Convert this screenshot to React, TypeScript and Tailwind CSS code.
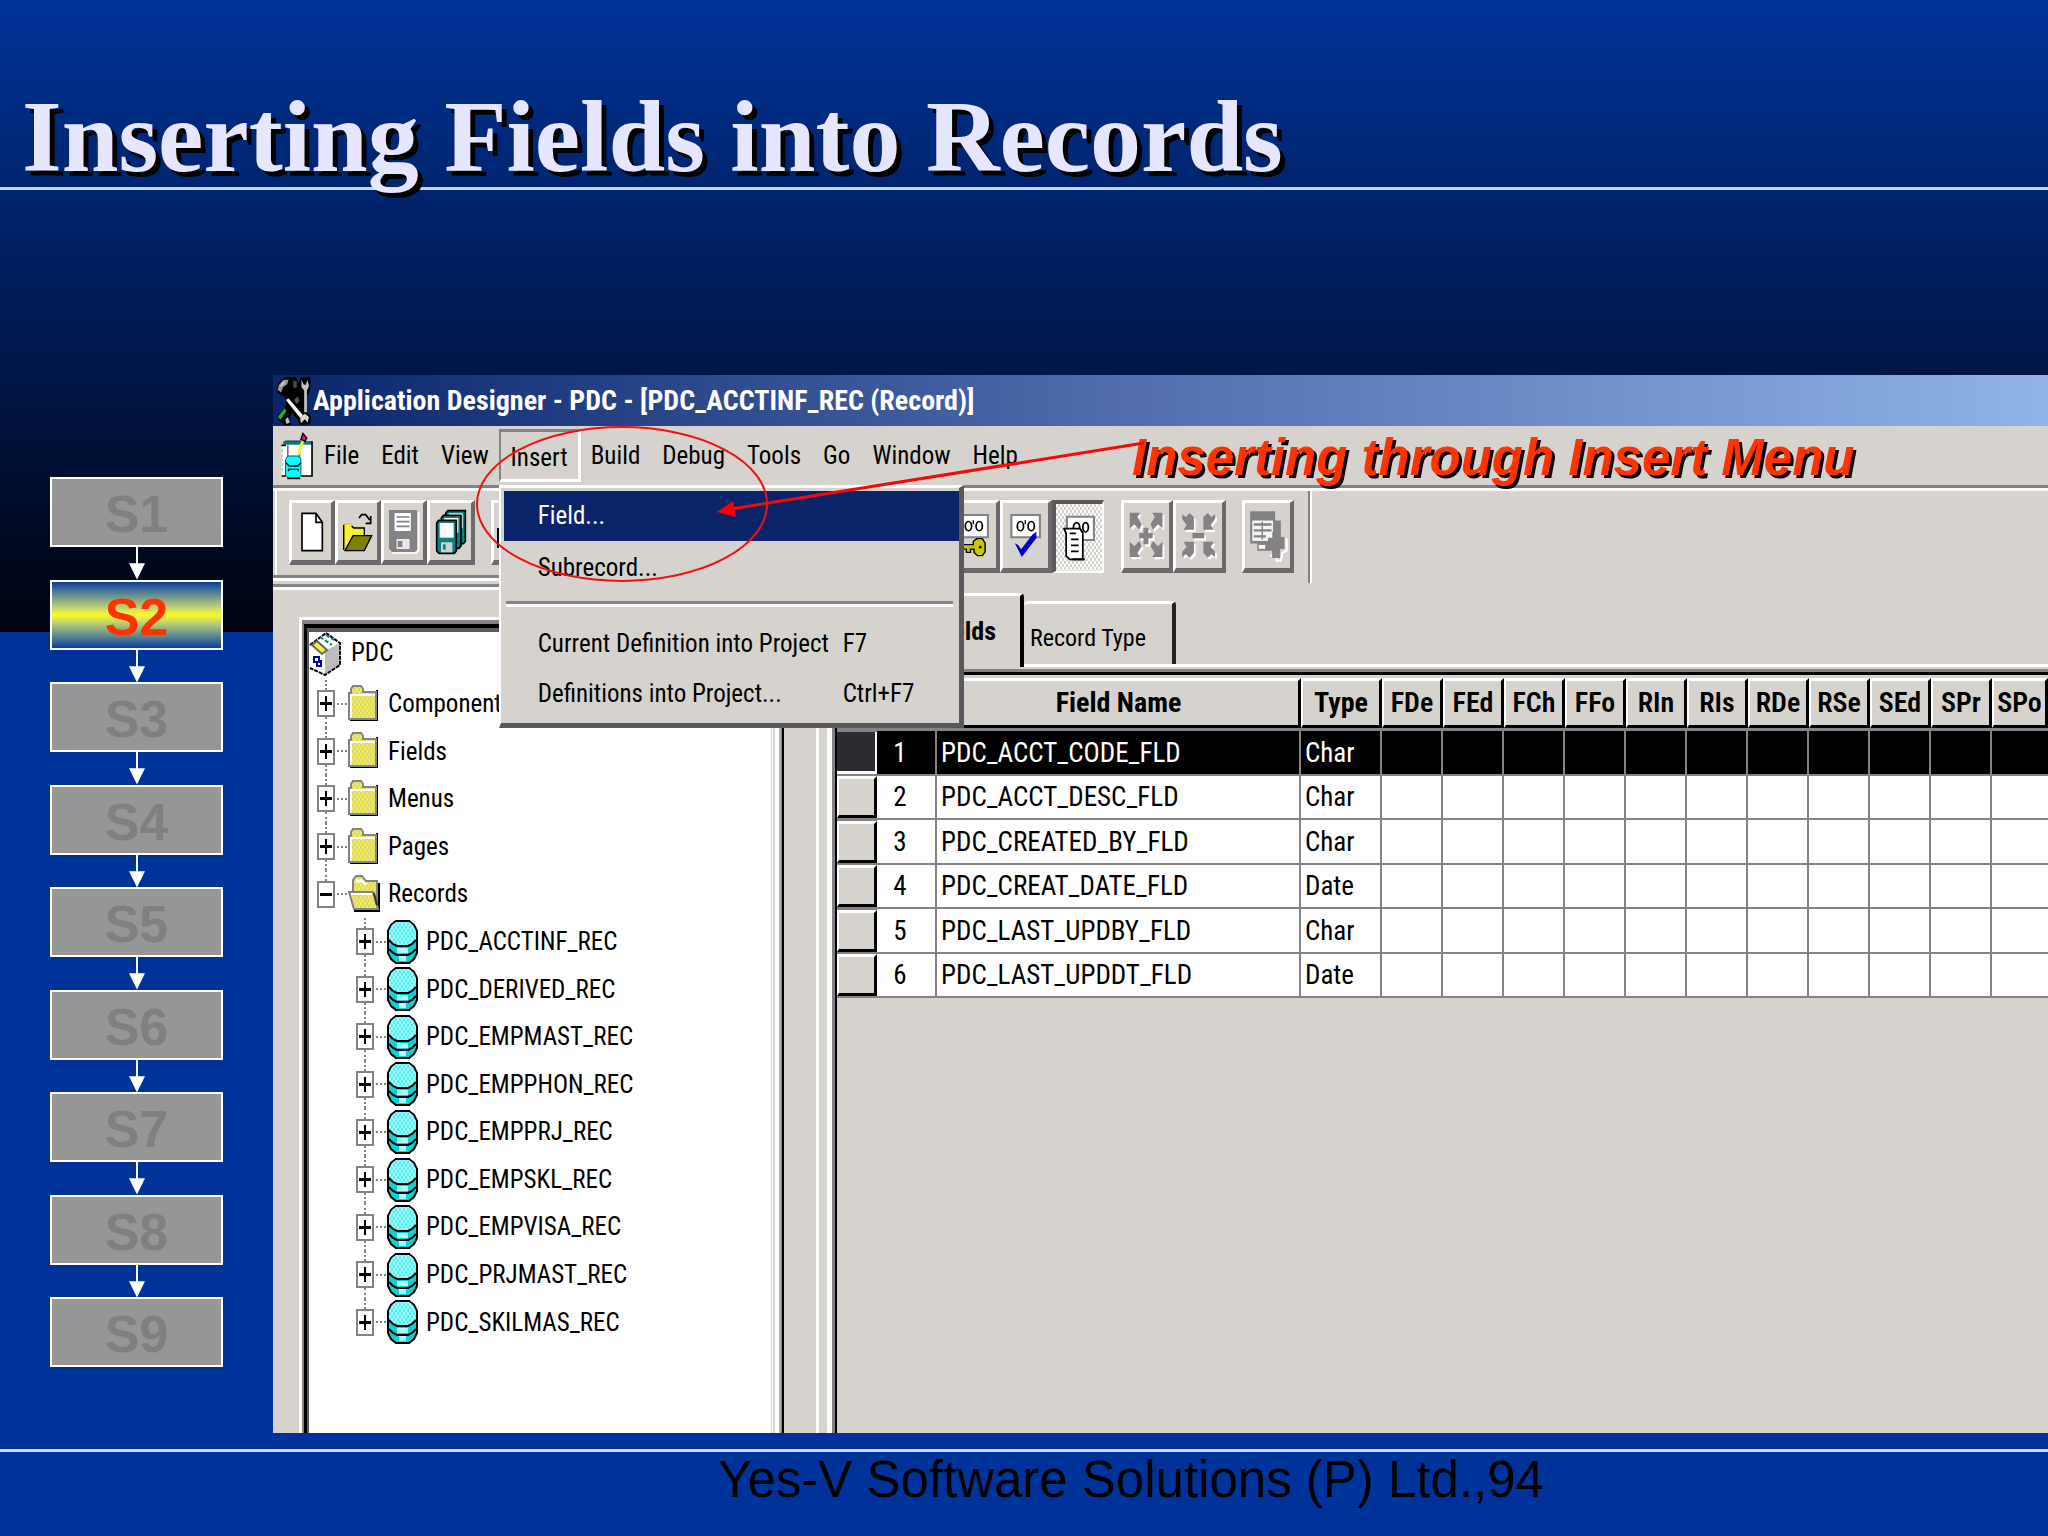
import React from "react";

const steps = ["S1", "S2", "S3", "S4", "S5", "S6", "S7", "S8", "S9"];
const folders = ["Components", "Fields", "Menus", "Pages"];
const records = [
  "PDC_ACCTINF_REC",
  "PDC_DERIVED_REC",
  "PDC_EMPMAST_REC",
  "PDC_EMPPHON_REC",
  "PDC_EMPPRJ_REC",
  "PDC_EMPSKL_REC",
  "PDC_EMPVISA_REC",
  "PDC_PRJMAST_REC",
  "PDC_SKILMAS_REC",
];
const flags = ["FDe", "FEd", "FCh", "FFo", "RIn", "RIs", "RDe", "RSe", "SEd", "SPr", "SPo"];
const fields = [
  ["PDC_ACCT_CODE_FLD", "Char"],
  ["PDC_ACCT_DESC_FLD", "Char"],
  ["PDC_CREATED_BY_FLD", "Char"],
  ["PDC_CREAT_DATE_FLD", "Date"],
  ["PDC_LAST_UPDBY_FLD", "Char"],
  ["PDC_LAST_UPDDT_FLD", "Date"],
];

function Svg({ box, w, h, children }: { box: string; w: number; h: number; children: React.ReactNode }) {
  return (
    <svg viewBox={box} width={w} height={h} preserveAspectRatio="none" className="block shrink-0" aria-hidden="true">
      {children}
    </svg>
  );
}

function Patterns() {
  return (
    <svg width="0" height="0" className="absolute" aria-hidden="true">
      <defs>
        <pattern id="yellow" width="4" height="6" patternUnits="userSpaceOnUse">
          <rect width="4" height="6" fill="#f4f03c" />
          <rect width="2" height="3" fill="#d8d48c" />
          <rect x="2" y="3" width="2" height="3" fill="#d8d48c" />
        </pattern>
        <pattern id="cyan" width="4" height="6" patternUnits="userSpaceOnUse">
          <rect width="4" height="6" fill="#4ff4f8" />
          <rect width="2" height="3" fill="#a8fcfc" />
          <rect x="2" y="3" width="2" height="3" fill="#a8fcfc" />
        </pattern>
      </defs>
    </svg>
  );
}

function ToolsIcon() {
  return (
    <Svg box="10 12 100 146" w={34} h={50}>
      <path d="M12 40 22 24 40 16 66 16 74 34 78 16 108 16 108 52 98 72 98 116 110 130 108 152 76 154 70 138 54 120 46 136 52 154 34 156 12 140 12 128 38 96 32 72 12 62Z" fill="#000" />
      <path d="M12 52 16 38 28 24 44 22 40 36 28 44 22 60Z" fill="#9a9a9a" />
      <path d="M16 44 26 30 34 28 28 40Z" fill="#c8c8c8" />
      <path d="M58 26H68V46H58Z" fill="#4a4a4a" />
      <path d="M36 82 44 78 86 126 78 134Z" fill="#fff" />
      <path d="M82 22 88 36 94 38 100 24 104 42 98 54 98 118H90V54L82 44Z" fill="#c4c4c4" />
      <path d="M78 132 92 122 104 132 100 148 92 138 80 150Z" fill="#d6d6d6" />
      <path d="M12 132 32 106 38 114 20 140Z" fill="#16b428" />
      <path d="M34 140 42 132 48 148 38 152Z" fill="#bdbdbd" />
      <path d="M60 82 70 72 76 84 68 94Z" fill="#555" />
    </Svg>
  );
}

function DocIcon() {
  return (
    <Svg box="20 184 104 144" w={34} h={48}>
      <path d="M25 222H118V316H25Z" fill="#fff" />
      <path d="M30 211H118V222H30Z" fill="#157a7a" />
      <path d="M118 212V316H84M25 316H38M24 224H38" fill="none" stroke="#000" strokeWidth="5" />
      <path d="M36 211H90" stroke="#063c3c" strokeWidth="3" />
      <path d="M27 236V308" stroke="#c0c0c0" strokeWidth="4" strokeDasharray="8 6" />
      <path d="M44 224V258M80 240V262" stroke="#555" strokeWidth="4" />
      <path d="M44 256H78L84 266V314L76 322H46L37 314V266Z" fill="#0ff" stroke="#0a5c66" strokeWidth="3" />
      <path d="M38 276 48 286H74L84 276M46 302V296H76V302" fill="none" stroke="#000" strokeWidth="4" />
      <path d="M42 323H82" stroke="#000" strokeWidth="5" />
      <path d="M76 252 92 204" stroke="#f4f03c" strokeWidth="9" />
      <path d="M84 206 90 188 102 202 96 212Z" fill="#c020a0" stroke="#000" strokeWidth="4" />
    </Svg>
  );
}

function NewIcon() {
  return (
    <Svg box="90 424 72 120" w={24} h={40}>
      <path d="M96 428H138L157 455V540H96Z" fill="#fff" stroke="#000" strokeWidth="5" />
      <path d="M138 428V455H157" fill="none" stroke="#000" strokeWidth="5" />
    </Svg>
  );
}

function OpenIcon() {
  return (
    <Svg box="220 422 90 120" w={30} h={40}>
      <path d="M224 458H244L252 468H284V492H250L226 536H224Z" fill="#f4f03c" stroke="#d8d020" strokeWidth="4" />
      <path d="M246 464 252 470H284V492M222 536V460" fill="none" stroke="#000" strokeWidth="4" />
      <path d="M250 493H306L284 538H226Z" fill="#808000" stroke="#000" strokeWidth="4" />
      <path d="M268 440 276 430H288L300 446M303 434V456H288" fill="none" stroke="#000" strokeWidth="5" />
    </Svg>
  );
}

function SaveIcon() {
  return (
    <Svg box="358 414 98 138" w={32} h={46}>
      <path d="M370 546H444L452 538V424" fill="none" stroke="#fff" strokeWidth="5" />
      <path d="M361 417H447V536L440 543H370L361 532Z" fill="#848284" />
      <path d="M378 426H428V480H378Z" fill="#fff" />
      <path d="M384 438H424M384 452H424M384 466H424" stroke="#848284" strokeWidth="5" />
      <path d="M384 504H424V534H384Z" fill="#e8e8e8" />
      <path d="M388 510H402V528H388Z" fill="#848284" />
    </Svg>
  );
}

function Disk({ x, y }: { x: number; y: number }) {
  return (
    <g transform={`translate(${x} ${y})`}>
      <path d="M497 456 503 448H556V540L550 547H504L497 540Z" fill="#0f8080" stroke="#000" strokeWidth="5" />
      <path d="M506 456H548V500H506Z" fill="#fff" />
      <path d="M510 514H544V544H510Z" fill="#d0d0d0" />
      <path d="M516 520H524V536H516Z" fill="#0f8080" />
    </g>
  );
}

function SaveAllIcon() {
  return (
    <Svg box="492 414 96 138" w={32} h={46}>
      <Disk x={27} y={-29} />
      <Disk x={14} y={-15} />
      <Disk x={0} y={0} />
    </Svg>
  );
}

function Glasses() {
  return (
    <>
      <path d="M644 430H726V498H644Z" fill="#fff" stroke="#848284" strokeWidth="6" />
      <ellipse cx="670" cy="464" rx="9" ry="14" fill="none" stroke="#000" strokeWidth="5" />
      <ellipse cx="701" cy="464" rx="9" ry="14" fill="none" stroke="#000" strokeWidth="5" />
      <path d="M684 446V458" stroke="#000" strokeWidth="4" />
    </>
  );
}

function KeyIcon() {
  return (
    <Svg box="640 424 92 140" w={32} h={46}>
      <Glasses />
      <path d="M648 520H684V510L694 502H710L718 516V542L710 554H696L686 544V534H676V544H664V534H648Z" fill="#c8c800" stroke="#000" strokeWidth="4" />
      <circle cx="704" cy="528" r="4" fill="#000" />
    </Svg>
  );
}

function CheckIcon() {
  return (
    <Svg box="640 424 92 140" w={32} h={46}>
      <Glasses />
      <path d="M654 516 664 522 672 534 706 488 716 482V500L674 558Z" fill="#0000c8" />
    </Svg>
  );
}

function ScrollIcon() {
  return (
    <Svg box="786 430 98 144" w={34} h={48}>
      <path d="M800 438H878V508H800Z" fill="#fff" stroke="#848284" strokeWidth="6" />
      <ellipse cx="828" cy="470" rx="9" ry="14" fill="none" stroke="#000" strokeWidth="5" />
      <ellipse cx="854" cy="470" rx="8" ry="14" fill="none" stroke="#000" strokeWidth="5" />
      <path d="M792 474H838L846 486V566H808L798 556V488Z" fill="#fff" stroke="#000" strokeWidth="5" />
      <path d="M808 488H826M812 506H834M812 524H834M812 542H834" stroke="#000" strokeWidth="5" />
      <path d="M816 566H852" stroke="#000" strokeWidth="6" />
    </Svg>
  );
}

function ExpandShape() {
  return (
    <>
      <path d="M977 427H1006L999 440 1011 462 1004 478 990 462 977 474ZM1070 427H1041L1048 440 1036 462 1043 478 1057 462 1070 474ZM977 560V514L990 528 1004 512 1011 528 999 548 1006 560ZM1070 560V514L1057 528 1043 512 1036 528 1048 548 1041 560Z" />
      <path d="M1016 472H1030V488H1042V504H1030V522H1016V504H1004V488H1016Z" />
    </>
  );
}

function ExpandIcon() {
  return (
    <Svg box="972 422 108 150" w={38} h={50}>
      <g transform="translate(5 7)" fill="#fff"><ExpandShape /></g>
      <g fill="#848284"><ExpandShape /></g>
    </Svg>
  );
}

function CollapseShape() {
  return (
    <>
      <path d="M1158 478H1130L1138 464 1126 446V432L1136 440 1146 428 1158 440ZM1184 478H1212L1204 464 1216 446V432L1206 440 1196 428 1184 440ZM1158 514H1130L1138 530 1126 544V560L1136 552 1146 562 1158 548ZM1184 514H1212L1204 530 1216 544V560L1206 552 1196 562 1184 548Z" />
      <path d="M1154 488H1186V504H1154Z" />
    </>
  );
}

function CollapseIcon() {
  return (
    <Svg box="1120 422 104 150" w={38} h={50}>
      <g transform="translate(5 7)" fill="#fff"><CollapseShape /></g>
      <g fill="#848284"><CollapseShape /></g>
    </Svg>
  );
}

function AddSheetIcon() {
  return (
    <Svg box="1312 422 112 158" w={40} h={52}>
      <path d="M1374 560H1392V576H1404L1408 552 1420 546V508" fill="none" stroke="#fff" strokeWidth="6" />
      <path d="M1318 426H1388V454H1404V504H1414V540H1402V568H1380V546H1338V524H1318Z" fill="#848284" />
      <path d="M1324 454H1382V516H1324Z" fill="#f4f4f4" />
      <path d="M1328 466H1378M1328 484H1378M1328 502H1362" stroke="#848284" strokeWidth="7" />
      <path d="M1352 458V512" stroke="#848284" strokeWidth="4" />
      <path d="M1368 506H1380V488H1396V506H1412V540H1396V566H1380V540H1368Z" fill="#848284" />
      <path d="M1342 528H1360V540H1342Z" fill="#fff" />
    </Svg>
  );
}

function FolderIcon() {
  return (
    <Svg box="0 0 30 38" w={30} h={38}>
      <path d="M2 36H30V5H28V34H2Z" fill="#000" />
      <path d="M1 8H3V4L5 1H13L15 4V7H28V34H1Z" fill="url(#yellow)" stroke="#848284" strokeWidth="2" />
      <path d="M3 33V10H27" fill="none" stroke="#fff" strokeWidth="2" />
    </Svg>
  );
}

function OpenFolderIcon() {
  return (
    <Svg box="0 0 32 38" w={32} h={38}>
      <path d="M6 37H32V8H29V34H6Z" fill="#000" />
      <path d="M5 30V5L8 1H14L18 6H29V33H6Z" fill="url(#yellow)" stroke="#848284" strokeWidth="2" />
      <path d="M8 6H14L18 10" fill="none" stroke="#fff" strokeWidth="3" />
      <path d="M1 17H25L30 34H6Z" fill="url(#yellow)" stroke="#848284" strokeWidth="2" />
      <path d="M3 19H24" stroke="#fff" strokeWidth="2" />
      <path d="M26 18 29 30" stroke="#333" strokeWidth="2" />
    </Svg>
  );
}

function RecordIcon() {
  return (
    <Svg box="0 0 31 44" w={31} h={44}>
      <path d="M1 11 4 5 9 1H22L27 5 30 11V33L27 39 22 43H9L4 39 1 33Z" fill="#10d0d4" stroke="#000" strokeWidth="2" />
      <path d="M2 11 5 5 9 2H22L26 5 29 11V19L25 24 20 26H11L6 24 2 19Z" fill="url(#cyan)" />
      <path d="M10 28H21V33H10ZM12 36H19V41H12Z" fill="#a8fcfc" />
      <path d="M2 20 6 24 10 26H21L25 24 29 20" fill="none" stroke="#000" strokeWidth="2" />
      <path d="M2 29 6 33 10 35H21L25 33 29 29" fill="none" stroke="#000" strokeWidth="2" />
      <path d="M8 1H23M8 43H23" stroke="#000" strokeWidth="2" />
    </Svg>
  );
}

function CubeIcon() {
  return (
    <Svg box="0 0 32 44" w={32} h={44}>
      <path d="M1 13 17 1 31 11V33L16 43 1 36Z" fill="#fff" />
      <path d="M16 19 31 11V33L16 43Z" fill="#bdbdbd" />
      <path d="M1 13 17 1 31 11V33L16 43 1 36" fill="none" stroke="#000" strokeWidth="2" strokeDasharray="4 1" />
      <path d="M11 5 23 13M17 3 25 8" stroke="#157a7a" strokeWidth="2" strokeDasharray="4 2" />
      <path d="M3 13 8 9 18 18 13 22Z" fill="#f4f03c" stroke="#666" strokeWidth="2" />
      <path d="M5 25H10V30H5ZM8 30V34H12V28" fill="none" stroke="#0000a8" strokeWidth="2" />
    </Svg>
  );
}

function Tool({ label, children, className = "" }: { label: string; children: React.ReactNode; className?: string }) {
  return (
    <button
      type="button"
      aria-label={label}
      className={`flex items-center justify-center border-t-3 border-r-4 border-b-5 border-l-3 border-t-white border-r-[#6b696b] border-b-[#6b696b] border-l-white bg-[#d6d3ce] ${className}`}
    >
      {children}
    </button>
  );
}

function Toggle({ name, open = false }: { name: string; open?: boolean }) {
  return (
    <button
      type="button"
      aria-label={`${open ? "Collapse" : "Expand"} ${name}`}
      className="flex h-[27px] w-[18px] shrink-0 items-center justify-center border-2 border-[#848284] bg-white"
    >
      <Svg box="0 0 12 15" w={12} h={15}>
        <path d="M0 7.5H12" stroke="#000" strokeWidth="3" />
        {!open && <path d="M6 0V15" stroke="#000" strokeWidth="2" />}
      </Svg>
    </button>
  );
}

/* One tree row: a dotted guide above and below the toggle, then icon and label. */
function TreeRow({ name, nested = false, open = false }: { name: string; nested?: boolean; open?: boolean }) {
  return (
    <li className={`flex min-h-0 flex-1 items-center ${nested ? "pl-[47px]" : "pl-2"}`}>
      <span className="flex h-full flex-col items-center">
        <span className="w-0 flex-1 border-l-2 border-dotted border-[#848284]" />
        <Toggle name={name} open={open} />
        <span className={`w-0 flex-1 border-l-2 border-dotted ${open || name === "PDC_SKILMAS_REC" ? "border-transparent" : "border-[#848284]"}`} />
      </span>
      <span className="mr-px ml-0.5 w-2.5 border-t-2 border-dotted border-[#848284]" />
      {nested ? <RecordIcon /> : open ? <OpenFolderIcon /> : <FolderIcon />}
      <span className={nested ? "ml-2" : open ? "ml-2" : "ml-2.5"}>{name}</span>
    </li>
  );
}

function InsertMenu() {
  return (
    <div
      role="menu"
      className="absolute top-[53px] -left-0.5 z-10 w-[465px] border-t-3 border-r-5 border-b-5 border-l-2 border-t-white border-r-[#5a585a] border-b-[#5a585a] border-l-white bg-[#d6d3ce] pt-[3px] pb-1 pl-[3px]"
    >
      <button role="menuitem" type="button" className="flex h-[50px] w-full items-center bg-[#0a246a] pl-[34px] text-white">
        Field...
      </button>
      <button role="menuitem" type="button" className="flex h-[54px] w-full items-center pl-[34px]">
        Subrecord...
      </button>
      <hr className="mt-1.5 mr-1.5 mb-3 ml-0.5 h-1.5 border-t-3 border-b-3 border-t-[#848284] border-b-white" />
      <button role="menuitem" type="button" className="flex h-[50px] w-full items-center pl-[34px]">
        <span className="w-[305px] text-left">Current Definition into Project</span>
        <span>F7</span>
      </button>
      <button role="menuitem" type="button" className="flex h-[50px] w-full items-center pl-[34px]">
        <span className="w-[305px] text-left">Definitions into Project...</span>
        <span>Ctrl+F7</span>
      </button>
    </div>
  );
}

function MenuBar() {
  return (
    <nav className="flex h-[59px] items-center pl-[7px]">
      <DocIcon />
      <button type="button" className="ml-2.5">File</button>
      <button type="button" className="ml-[22px]">Edit</button>
      <button type="button" className="ml-[22px]">View</button>
      <div className="relative ml-2.5 h-[53px] w-[82px] border-t-3 border-r-3 border-b-3 border-l-2 border-t-[#848284] border-r-white border-b-white border-l-[#848284]">
        <button type="button" aria-haspopup="menu" aria-expanded="true" className="h-full w-full pt-1">
          Insert
        </button>
        <InsertMenu />
      </div>
      <button type="button" className="ml-2.5">Build</button>
      <button type="button" className="ml-[22px]">Debug</button>
      <button type="button" className="ml-[22px]">Tools</button>
      <button type="button" className="ml-[22px]">Go</button>
      <button type="button" className="ml-[22px]">Window</button>
      <button type="button" className="ml-[22px]">Help</button>
    </nav>
  );
}

function Toolbar() {
  return (
    <div className="flex h-[105px] border-t-3 border-t-[#848284]">
      <div className="flex w-[675px] flex-col border-t-3 border-t-white">
        <div className="ml-0.5 flex flex-1 items-start border-l-2 border-l-white pt-[9px] pl-3">
          <Tool label="New" className="h-[65px] w-[46px]"><NewIcon /></Tool>
          <Tool label="Open" className="h-[65px] w-[46px]"><OpenIcon /></Tool>
          <Tool label="Save" className="h-[65px] w-[46px]"><SaveIcon /></Tool>
          <Tool label="Save All" className="h-[65px] w-[48px]"><SaveAllIcon /></Tool>
          <Tool label="Print" className="ml-4 h-[65px] w-[46px]">
            <Svg box="0 0 38 46" w={38} h={46}>
              <path d="M3 20H35V38H3Z" fill="#d6d3ce" stroke="#000" strokeWidth="2" />
              <path d="M9 20V4H29V20" fill="#fff" stroke="#000" strokeWidth="2" />
            </Svg>
          </Tool>
        </div>
        <div className="h-1.5 border-t-3 border-b-3 border-t-[#848284] border-b-white" />
        <div className="mt-[3px] h-1.5 border-t-3 border-b-3 border-t-[#848284] border-b-white" />
      </div>
      <div className="flex flex-1 items-start border-t-3 border-t-white pt-[9px]">
        <Tool label="Key display" className="h-[73px] w-[52px]"><KeyIcon /></Tool>
        <Tool label="Edit display" className="h-[73px] w-[52px]"><CheckIcon /></Tool>
        <button
          type="button"
          aria-label="Use display"
          aria-pressed="true"
          className="flex h-[73px] w-[52px] items-center justify-center border-t-4 border-r-2 border-b-2 border-l-4 border-t-[#5a585a] border-r-white border-b-white border-l-[#5a585a] bg-[repeating-conic-gradient(#d6d3ce_0_25%,#ffffff_0_50%)] bg-[length:4px_6px]"
        >
          <ScrollIcon />
        </button>
        <Tool label="Expand" className="ml-[17px] h-[73px] w-[52px]"><ExpandIcon /></Tool>
        <Tool label="Collapse" className="h-[73px] w-[53px]"><CollapseIcon /></Tool>
        <Tool label="Insert into project" className="ml-4 h-[73px] w-[52px]"><AddSheetIcon /></Tool>
        <span className="-mt-[9px] ml-3.5 h-[92px] w-1 border-r-2 border-l-2 border-r-white border-l-[#848284]" />
      </div>
    </div>
  );
}

function ProjectTree() {
  return (
    <div className="flex w-[559px] shrink-0 pt-[27px] pl-[26px]">
      <div className="flex flex-1 border-t-3 border-l-3 border-white">
        <div className="flex flex-1 border-t-4 border-l-2 border-[#848284]">
          <div className="flex flex-1 border-t-4 border-l-3 border-black">
            <div className="flex-1 border-t-4 border-l-2 border-[#5a585a] bg-white text-[25px]">
              <div className="flex h-12 items-start">
                <CubeIcon />
                <span className="ml-2.5 pt-0.5">PDC</span>
              </div>
              <ul className="flex h-[666px] flex-col">
                {folders.map((name) => (
                  <TreeRow key={name} name={name} />
                ))}
                <TreeRow name="Records" open />
                {records.map((name) => (
                  <TreeRow key={name} name={name} nested />
                ))}
              </ul>
            </div>
          </div>
        </div>
      </div>
      <div className="w-1 border-r-2 border-l border-r-[#d6d3ce] border-l-[#d6d3ce] bg-white" />
      <div className="w-1.5 border-r-2 border-r-[#b5b2ad] bg-white" />
      <div className="w-[3px] border-r-2 border-r-black bg-[#848284]" />
      <div className="w-8" />
      <div className="w-[3px] bg-white" />
      <div className="w-2" />
      <div className="w-[5px] bg-white" />
    </div>
  );
}

function FieldGrid() {
  return (
    <table className="w-full table-fixed border-separate border-spacing-0 text-[27px]">
      <colgroup>
        <col className="w-10" />
        <col className="w-[60px]" />
        <col className="w-[364px]" />
        <col className="w-[81px]" />
        {flags.map((f) => (
          <col key={f} className={f === "SPo" ? "" : "w-[61px]"} />
        ))}
      </colgroup>
      <thead>
        <tr className="h-[53px] text-[28px] leading-8">
          {["", "", "Field Name", "Type", ...flags].map((h, i) => (
            <th
              key={i}
              className={`overflow-hidden border-b-3 border-b-[#848284] p-0 whitespace-nowrap ${i > 3 ? "font-semibold" : "font-bold"}`}
            >
              <div className="flex h-[50px] items-center justify-center border-t-3 border-r-3 border-b-3 border-l-2 border-t-white border-r-black border-b-black border-l-white">
                {h}
              </div>
            </th>
          ))}
        </tr>
      </thead>
      <tbody>
        {fields.map(([name, type], i) => (
          <tr key={name} className={`leading-8 odd:h-[45px] even:h-11 ${i === 0 ? "bg-black text-white" : "bg-white text-black"}`}>
            <td className="border-b-2 border-[#848284] bg-[#848284] p-0">
              <div
                className={
                  i === 0
                    ? "h-[42px] border-r-2 border-b-3 border-white bg-[#2a2c31]"
                    : "h-[42px] border-t-3 border-r-3 border-b-3 border-l-2 border-t-white border-r-black border-b-black border-l-white bg-[#d6d3ce]"
                }
              />
            </td>
            <td className="border-r-2 border-b-2 border-[#848284] p-0 pr-3 text-center">{i + 1}</td>
            <td className="border-r-2 border-b-2 border-[#848284] p-0 pl-1">{name}</td>
            <td className="border-r-2 border-b-2 border-[#848284] p-0 pl-1">{type}</td>
            {flags.map((f) => (
              <td key={f} className="border-r-2 border-b-2 border-[#848284] p-0 last:border-r-0" />
            ))}
          </tr>
        ))}
      </tbody>
    </table>
  );
}

function RecordPane() {
  return (
    <div className="flex min-w-0 flex-1 flex-col pt-[3px]">
      <div role="tablist" className="flex h-[74px] items-end pl-2">
        <button
          role="tab"
          aria-selected="true"
          type="button"
          className="h-[74px] w-[184px] rounded-t border-t-3 border-r-4 border-t-white border-r-black pr-6 text-right text-[26px] font-bold"
        >
          Fields
        </button>
        <div className="flex h-[66px] flex-1 border-b-3 border-b-white">
          <button
            role="tab"
            aria-selected="false"
            type="button"
            className="w-[152px] rounded-t border-t-3 border-r-4 border-t-white border-r-[#222] pt-2 pl-1.5 text-left text-[24px]"
          >
            Record Type
          </button>
        </div>
      </div>
      <div className="mt-0.5 flex-1 overflow-hidden border-t-3 border-l-3 border-t-[#848284] border-l-[#848284]">
        <div className="h-full border-t-3 border-l-2 border-black pt-[3px]">
          <FieldGrid />
        </div>
      </div>
    </div>
  );
}

function DesignerWindow() {
  return (
    <section className="relative flex min-w-0 flex-1 flex-col bg-[#d6d3ce] font-['Roboto_Condensed','Liberation_Sans',sans-serif] text-[25px] text-black">
      <div className="flex h-[51px] items-center bg-linear-to-r from-[#0a246a] via-[#5470b0] via-50% to-[#90b4e6] pl-1 text-[28px] font-bold text-white">
        <ToolsIcon />
        <span className="ml-0.5 whitespace-nowrap">Application Designer - PDC - [PDC_ACCTINF_REC (Record)]</span>
      </div>
      <MenuBar />
      <Toolbar />
      <div className="flex flex-1">
        <ProjectTree />
        <RecordPane />
      </div>
      <svg className="pointer-events-none absolute top-0 left-0 z-20" width="900" height="220" aria-hidden="true">
        <ellipse cx="349" cy="129" rx="145" ry="77" fill="none" stroke="#f01010" strokeWidth="2" />
        <path d="M871 68 458 134" stroke="#f80808" strokeWidth="3" />
        <path d="M444 137 460 126 463 142Z" fill="#f00" />
      </svg>
      <p className="absolute top-[53px] left-[859px] z-10 font-['Liberation_Sans',Arial,sans-serif] text-[51px] leading-[60px] font-bold whitespace-nowrap text-[#ff3300] italic [text-shadow:3px_3px_0_#000]">
        Inserting through Insert Menu
      </p>
    </section>
  );
}

function StepChain() {
  return (
    <aside className="w-[273px] shrink-0 pt-[102px] pl-[50px] font-['Liberation_Sans',Arial,sans-serif]">
      <ol className="flex h-[890px] w-[173px] flex-col">
        {steps.map((s, i) => (
          <React.Fragment key={s}>
            {i > 0 && (
              <li aria-hidden="true" className="flex flex-1 justify-center">
                <svg viewBox="0 0 18 32" preserveAspectRatio="none" className="h-full w-[18px]">
                  <path d="M9 0V20" stroke="#fff" strokeWidth="2" />
                  <path d="M1 16H17L9 32Z" fill="#fff" />
                </svg>
              </li>
            )}
            <li
              className={`flex h-[70px] shrink-0 items-center justify-center border-2 border-white pt-1 text-[52px] leading-[60px] font-bold ${
                s === "S2"
                  ? "bg-linear-to-b from-[#0c3c98] via-[#fcfc08] to-[#0c3c98] text-[#ff3300]"
                  : "bg-[#969696] text-[#808080]"
              }`}
            >
              {s}
            </li>
          </React.Fragment>
        ))}
      </ol>
    </aside>
  );
}

export default function App() {
  return (
    <div className="flex min-h-screen flex-col overflow-hidden bg-[#003399] bg-[linear-gradient(to_bottom,#003399_0,#00081e_560px,#000412_632px,#003399_632px)]">
      <Patterns />
      <header className="h-[190px] border-b-3 border-[#c8d4f4] pt-[82px] pl-[22px]">
        <h1 className="font-['Liberation_Serif',serif] text-[102px] leading-[110px] font-bold whitespace-nowrap text-[#e6e6ff] [text-shadow:5px_5px_0_#000]">
          Inserting Fields into Records
        </h1>
      </header>
      <main className="mt-[185px] flex flex-1">
        <StepChain />
        <DesignerWindow />
      </main>
      <footer className="mt-4 h-[87px] border-t-3 border-[#d4dcf4] pl-[214px] font-['Liberation_Sans',Arial,sans-serif] text-[51px] leading-[56px] text-black">
        <p className="text-center">Yes-V Software Solutions (P) Ltd.,94</p>
      </footer>
    </div>
  );
}
